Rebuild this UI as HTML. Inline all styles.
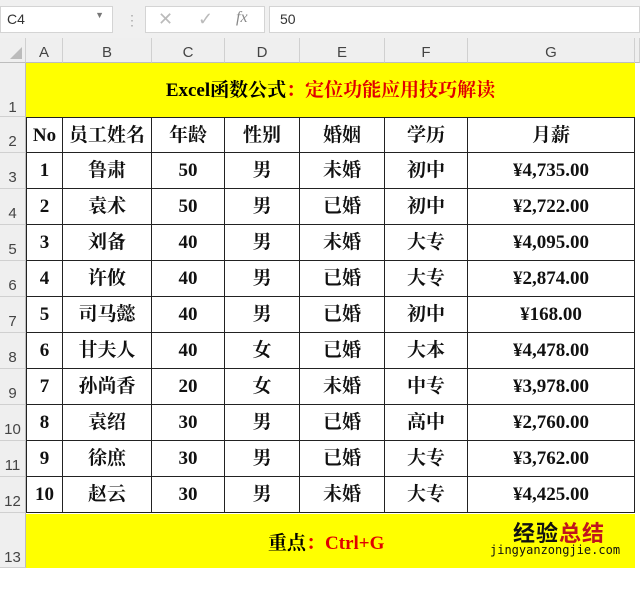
<!DOCTYPE html><html><head><meta charset="utf-8"><style>
*{margin:0;padding:0;box-sizing:border-box}
body{width:640px;height:568px;background:#fff;position:relative;overflow:hidden;font-family:"Liberation Serif","Noto Serif CJK SC",serif}
.top{position:absolute;left:0;top:0;width:640px;height:38px;background:#f0f0f0}
.box{position:absolute;background:#fff;border:1px solid #d4d4d4;font-family:"Liberation Sans",sans-serif;font-size:14px;color:#333}
.colh{position:absolute;top:38px;height:25px;background:#efefef;border-right:1px solid #d0d0d0;border-bottom:1px solid #bdbdbd;font-family:"Liberation Sans",sans-serif;font-size:15px;color:#444;text-align:center;line-height:30px}
.rowh{position:absolute;left:0;width:26px;background:#efefef;border-bottom:1px solid #d0d0d0;border-right:1px solid #bdbdbd;font-family:"Liberation Sans",sans-serif;font-size:15px;color:#444;text-align:center}
.c{position:absolute;border-right:1px solid #222;border-bottom:1px solid #222;text-align:center;font-size:19px;font-weight:bold;color:#111;line-height:35px}
.y{position:absolute;background:#ffff00}
</style></head><body>
<div class="top"></div>
<div class="box" style="left:0;top:6px;width:113px;height:27px;padding:4px 6px">C4<span style="position:absolute;right:8px;top:3px;font-size:9px;color:#777">▼</span></div>
<div style="position:absolute;left:125px;top:12px;color:#aaa;font-size:14px;font-family:'Liberation Sans'">⋮</div>
<div class="box" style="left:145px;top:6px;width:120px;height:27px;color:#bbb;font-size:18px"><span style="position:absolute;left:12px;top:2px">✕</span><span style="position:absolute;left:52px;top:2px">✓</span><span style="position:absolute;left:90px;top:2px;font-family:'Liberation Serif';font-style:italic;color:#888;font-size:16px">fx</span></div>
<div class="box" style="left:269px;top:6px;width:371px;height:27px;padding:4px 10px">50</div>
<div class="colh" style="left:0;width:26px;background:#efefef"><span style="position:absolute;right:3px;bottom:3px;width:0;height:0;border-left:12px solid transparent;border-bottom:12px solid #bbb"></span></div>
<div class="colh" style="left:26px;width:37px">A</div>
<div class="colh" style="left:63px;width:89px">B</div>
<div class="colh" style="left:152px;width:73px">C</div>
<div class="colh" style="left:225px;width:75px">D</div>
<div class="colh" style="left:300px;width:85px">E</div>
<div class="colh" style="left:385px;width:83px">F</div>
<div class="colh" style="left:468px;width:167px">G</div>
<div class="colh" style="left:635px;width:5px"></div>
<div class="y" style="left:26px;top:63px;width:609px;height:54px;text-align:center;line-height:56px;font-size:19px;font-weight:bold">Excel函数公式<span style="color:#e00000">：定位功能应用技巧解读</span></div>
<div class="y" style="left:26px;top:514px;width:609px;height:54px"></div>
<div style="position:absolute;left:268px;top:528px;font-size:19px;font-weight:bold">重点<span style="color:#e00000">：Ctrl+G</span></div>
<div style="position:absolute;left:513px;top:516px;font-family:'Noto Sans CJK SC',sans-serif;font-size:22px;font-weight:bold;color:#111;letter-spacing:1px">经验<span style="color:#c0141c">总结</span></div>
<div style="position:absolute;left:490px;top:543px;font-family:'DejaVu Sans Mono',monospace;font-size:12px;color:#111">jingyanzongjie.com</div>
<div id="g"></div>
<script>
var cols=[26,63,152,225,300,385,468,635];
var rows=[["No","员工姓名","年龄","性别","婚姻","学历","月薪"],
["1","鲁肃","50","男","未婚","初中","¥4,735.00"],["2","袁术","50","男","已婚","初中","¥2,722.00"],
["3","刘备","40","男","未婚","大专","¥4,095.00"],["4","许攸","40","男","已婚","大专","¥2,874.00"],
["5","司马懿","40","男","已婚","初中","¥168.00"],["6","甘夫人","40","女","已婚","大本","¥4,478.00"],
["7","孙尚香","20","女","未婚","中专","¥3,978.00"],["8","袁绍","30","男","已婚","高中","¥2,760.00"],
["9","徐庶","30","男","已婚","大专","¥3,762.00"],["10","赵云","30","男","未婚","大专","¥4,425.00"]];
var h='';
h+='<div class="rowh" style="top:63px;height:54px;line-height:90px">1</div>';
for(var r=0;r<11;r++){var t=117+r*36;
h+='<div class="rowh" style="top:'+t+'px;height:36px;line-height:50px">'+(r+2)+'</div>';
for(var c=0;c<7;c++){
h+='<div class="c" style="left:'+cols[c]+'px;top:'+t+'px;width:'+(cols[c+1]-cols[c])+'px;height:36px;'+(c==0?'border-left:1px solid #222;':'')+(r==0?'border-top:1px solid #222;':'')+'">'+rows[r][c]+'</div>';}}
h+='<div class="rowh" style="top:513px;height:55px;line-height:90px">13</div>';
document.getElementById('g').innerHTML=h;
</script>
</body></html>
